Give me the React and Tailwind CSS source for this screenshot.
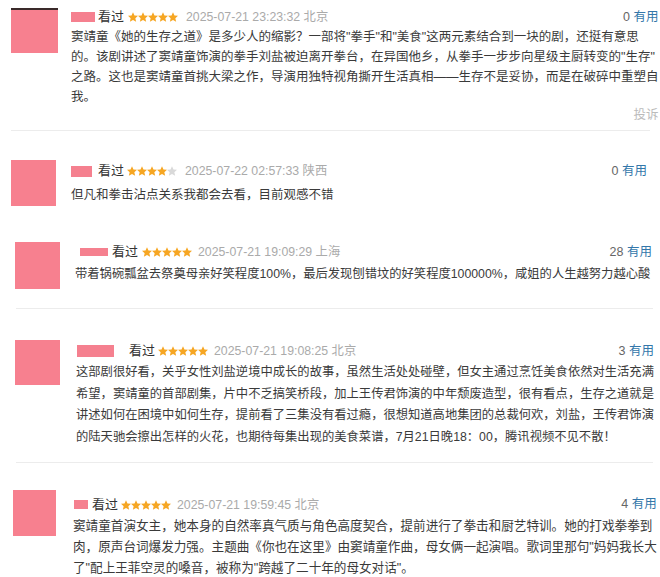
const FONT = '"Liberation Sans","Noto Sans CJK SC",sans-serif'

function Stars({ count }) {
  return (
    <span className="flex items-center">
      {[0, 1, 2, 3, 4].map((i) => (
        <svg key={i} width="10" height="10" viewBox="1.5 1.5 21 20" className="block">
          <path
            d="M12 1.5l3.1 6.9 7.4.7-5.6 5 1.7 7.4L12 17.6l-6.6 3.9 1.7-7.4-5.6-5 7.4-.7z"
            fill={i < count ? '#f6a623' : '#d9d9d9'}
          />
        </svg>
      ))}
    </span>
  )
}

function Header({ r }) {
  return (
    <div className={`flex items-center justify-between h-[16px] ${r.headPad}`}>
      <div className="flex items-center">
        <span className={`${r.nameCls} bg-[#f5808f] block`} />
        <span className="text-[#333] text-[13px]">看过</span>
        <span className={r.starGap}>
          <Stars count={r.stars} />
        </span>
        <span className={`${r.dateGap} text-[#aaa] text-[12.3px]`}>{r.date}</span>
      </div>
      <span className="text-[12.5px]">
        <span className="text-[#666]">{r.useful} </span>
        <span className="text-[#3377aa]">有用</span>
      </span>
    </div>
  )
}

const reviews = [
  {
    wrap: 'pt-[8px] pl-[11px] pr-[13px]',
    avatar: 'w-[47px] h-[45px] border-t-2 border-[#3a2a2a]',
    gap: 'ml-[13px]',
    headPad: 'mt-[1px]',
    nameCls: 'w-[24px] h-[10px] mr-[3px]',
    starGap: 'ml-[4px]',
    dateGap: 'ml-[8px]',
    stars: 5,
    date: '2025-07-21 23:23:32 北京',
    useful: '0',
    text: 'mt-[2px] leading-[20px] text-[12.5px]',
    lines: [
      '窦靖童《她的生存之道》是多少人的缩影？一部将"拳手"和"美食"这两元素结合到一块的剧，还挺有意思',
      '的。该剧讲述了窦靖童饰演的拳手刘盐被迫离开拳台，在异国他乡，从拳手一步步向星级主厨转变的"生存"',
      '之路。这也是窦靖童首挑大梁之作，导演用独特视角撕开生活真相——生存不是妥协，而是在破碎中重塑自',
      '我。',
    ],
    report: true,
    divider: 'mt-[7px] ml-[11px] mr-[10px]',
  },
  {
    wrap: 'pt-[29px] pl-[11px] pr-[13px]',
    avatar: 'w-[45px] h-[46px]',
    gap: 'ml-[15px]',
    headPad: 'mt-[3px]',
    nameCls: 'w-[21px] h-[11px] mr-[6px]',
    starGap: 'ml-[3px]',
    dateGap: 'ml-[8px]',
    stars: 4,
    date: '2025-07-22 02:57:33 陕西',
    useful: '0',
    text: 'mt-[6px] leading-[20px] text-[12.5px]',
    lines: ['但凡和拳击沾点关系我都会去看，目前观感不错'],
  },
  {
    wrap: 'pt-[36px] pl-[15px] pr-[8px]',
    avatar: 'w-[45px] h-[47px]',
    gap: 'ml-[15px]',
    headPad: 'mt-[2px]',
    nameCls: 'w-[28px] h-[8px] ml-[5px] mr-[4px]',
    starGap: 'ml-[4px]',
    dateGap: 'ml-[6px]',
    stars: 5,
    date: '2025-07-21 19:09:29 上海',
    useful: '28',
    text: 'mt-[4px] leading-[20px] text-[12.3px]',
    lines: ['带着锅碗瓢盆去祭奠母亲好笑程度100%，最后发现刨错坟的好笑程度100000%，咸姐的人生越努力越心酸'],
    divider: 'mt-[19px] ml-[16px] mr-[7px]',
  },
  {
    wrap: 'pt-[31px] pl-[15px] pr-[9px]',
    avatar: 'w-[45px] h-[45px]',
    gap: 'ml-[16px]',
    headPad: 'mt-[3px]',
    nameCls: 'w-[37px] h-[12px] ml-[1px] mr-[15px]',
    starGap: 'ml-[3px]',
    dateGap: 'ml-[6px]',
    stars: 5,
    date: '2025-07-21 19:08:25 北京',
    useful: '3',
    text: 'mt-[3px] leading-[21.7px] text-[12.3px]',
    lines: [
      '这部剧很好看，关乎女性刘盐逆境中成长的故事，虽然生活处处碰壁，但女主通过烹饪美食依然对生活充满',
      '希望，窦靖童的首部剧集，片中不乏搞笑桥段，加上王传君饰演的中年颓废造型，很有看点，生存之道就是',
      '讲述如何在困境中如何生存，提前看了三集没有看过瘾，很想知道高地集团的总裁何欢，刘盐，王传君饰演',
      '的陆天驰会擦出怎样的火花，也期待每集出现的美食菜谱，7月21日晚18：00，腾讯视频不见不散！',
    ],
    divider: 'mt-[13px] ml-[16px] mr-[7px]',
  },
  {
    wrap: 'pt-[27px] pl-[13px] pr-[9px]',
    avatar: 'w-[43px] h-[46px]',
    gap: 'ml-[17px]',
    headPad: 'mt-[7px]',
    nameCls: 'w-[14px] h-[9px] ml-[1px] mr-[4px]',
    starGap: 'ml-[3px]',
    dateGap: 'ml-[6px]',
    stars: 5,
    date: '2025-07-21 19:59:45 北京',
    useful: '4',
    text: 'mt-[3px] leading-[21px] text-[12.6px]',
    lines: [
      '窦靖童首演女主，她本身的自然率真气质与角色高度契合，提前进行了拳击和厨艺特训。她的打戏拳拳到',
      '肉，原声台词爆发力强。主题曲《你也在这里》由窦靖童作曲，母女俩一起演唱。歌词里那句"妈妈我长大',
      '了"配上王菲空灵的嗓音，被称为"跨越了二十年的母女对话"。',
    ],
  },
]

export default function App() {
  return (
    <div className="w-[660px] h-[577px] overflow-hidden bg-white" style={{ fontFamily: FONT }}>
      {reviews.map((r, idx) => (
        <div key={idx}>
          <div className={`flex items-start ${r.wrap}`}>
            <div className={`${r.avatar} bg-[#f7808f] shrink-0`} />
            <div className={`flex-1 ${r.gap}`}>
              <Header r={r} />
              <div className={`${r.text} text-[#3a3a3a] whitespace-nowrap`}>
                {r.lines.map((l, i) => (
                  <div key={i}>{l}</div>
                ))}
              </div>
              {r.report && (
                <div className="flex justify-end h-[16px] leading-[16px] text-[12.5px] text-[#bbb]">投诉</div>
              )}
            </div>
          </div>
          {r.divider && <div className={`${r.divider} border-t border-[#ececec]`} />}
        </div>
      ))}
    </div>
  )
}
